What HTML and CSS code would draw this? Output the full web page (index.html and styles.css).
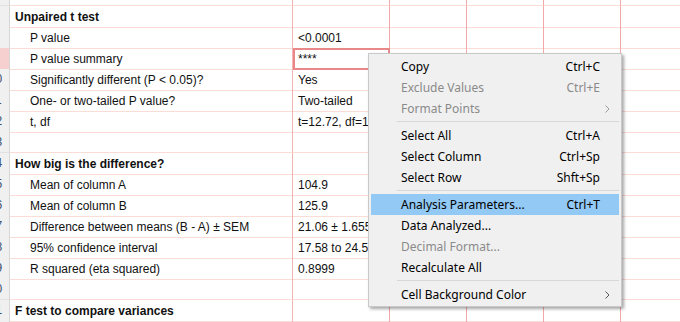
FILE: index.html
```html
<!DOCTYPE html>
<html lang="en">
<head>
    <meta charset="UTF-8">
    <title>Unpaired t test</title>
    <link rel="stylesheet" href="styles.css">
</head>
<body>

<div class="sheet">
    <div class="row top"><div class="hdr"></div><div class="cell a"></div><div class="cell b"></div><div class="cell c"></div><div class="cell c"></div><div class="cell c"></div><div class="cell d"></div></div>

    <div class="row"><div class="hdr"></div><div class="cell a title">Unpaired t test</div><div class="cell b"></div><div class="cell c"></div><div class="cell c"></div><div class="cell c"></div><div class="cell d"></div></div>
    <div class="row"><div class="hdr"></div><div class="cell a sub">P value</div><div class="cell b">&lt;0.0001</div><div class="cell c"></div><div class="cell c"></div><div class="cell c"></div><div class="cell d"></div></div>
    <div class="row"><div class="hdr picked"></div><div class="cell a sub">P value summary</div><div class="cell b selected">****</div><div class="cell c"></div><div class="cell c"></div><div class="cell c"></div><div class="cell d"></div></div>
    <div class="row"><div class="hdr"><span>10</span></div><div class="cell a sub">Significantly different (P &lt; 0.05)?</div><div class="cell b">Yes</div><div class="cell c"></div><div class="cell c"></div><div class="cell c"></div><div class="cell d"></div></div>
    <div class="row"><div class="hdr"><span>11</span></div><div class="cell a sub">One- or two-tailed P value?</div><div class="cell b">Two-tailed</div><div class="cell c"></div><div class="cell c"></div><div class="cell c"></div><div class="cell d"></div></div>
    <div class="row"><div class="hdr"><span>12</span></div><div class="cell a sub">t, df</div><div class="cell b">t=12.72, df=18</div><div class="cell c"></div><div class="cell c"></div><div class="cell c"></div><div class="cell d"></div></div>
    <div class="row"><div class="hdr"><span>13</span></div><div class="cell a"></div><div class="cell b"></div><div class="cell c"></div><div class="cell c"></div><div class="cell c"></div><div class="cell d"></div></div>
    <div class="row"><div class="hdr"><span>14</span></div><div class="cell a title">How big is the difference?</div><div class="cell b"></div><div class="cell c"></div><div class="cell c"></div><div class="cell c"></div><div class="cell d"></div></div>
    <div class="row"><div class="hdr"><span>15</span></div><div class="cell a sub">Mean of column A</div><div class="cell b">104.9</div><div class="cell c"></div><div class="cell c"></div><div class="cell c"></div><div class="cell d"></div></div>
    <div class="row"><div class="hdr"><span>16</span></div><div class="cell a sub">Mean of column B</div><div class="cell b">125.9</div><div class="cell c"></div><div class="cell c"></div><div class="cell c"></div><div class="cell d"></div></div>
    <div class="row"><div class="hdr"><span>17</span></div><div class="cell a sub">Difference between means (B - A) ± SEM</div><div class="cell b">21.06 ± 1.655</div><div class="cell c"></div><div class="cell c"></div><div class="cell c"></div><div class="cell d"></div></div>
    <div class="row"><div class="hdr"><span>18</span></div><div class="cell a sub">95% confidence interval</div><div class="cell b">17.58 to 24.53</div><div class="cell c"></div><div class="cell c"></div><div class="cell c"></div><div class="cell d"></div></div>
    <div class="row"><div class="hdr"><span>19</span></div><div class="cell a sub">R squared (eta squared)</div><div class="cell b">0.8999</div><div class="cell c"></div><div class="cell c"></div><div class="cell c"></div><div class="cell d"></div></div>
    <div class="row"><div class="hdr"><span>20</span></div><div class="cell a"></div><div class="cell b"></div><div class="cell c"></div><div class="cell c"></div><div class="cell c"></div><div class="cell d"></div></div>
    <div class="row"><div class="hdr"><span>21</span></div><div class="cell a title">F test to compare variances</div><div class="cell b"></div><div class="cell c"></div><div class="cell c"></div><div class="cell c"></div><div class="cell d"></div></div>
    <div class="row end"><div class="hdr"></div><div class="cell a"></div><div class="cell b"></div><div class="cell c"></div><div class="cell c"></div><div class="cell c"></div><div class="cell d"></div></div>
</div>

<ul class="menu">
    <li class="item"><span>Copy</span><span class="key">Ctrl+C</span></li>
    <li class="item off"><span>Exclude Values</span><span class="key">Ctrl+E</span></li>
    <li class="item off"><span>Format Points</span><svg class="arrow" width="5" height="8" viewBox="0 0 5 8"><path d="M0.5 0.5 L4 4 L0.5 7.5" fill="none" stroke="#9a9a9a" stroke-width="1"/></svg></li>
    <li class="sep"></li>
    <li class="item"><span>Select All</span><span class="key">Ctrl+A</span></li>
    <li class="item"><span>Select Column</span><span class="key">Ctrl+Sp</span></li>
    <li class="item"><span>Select Row</span><span class="key">Shft+Sp</span></li>
    <li class="sep"></li>
    <li class="item hover"><span>Analysis Parameters...</span><span class="key">Ctrl+T</span></li>
    <li class="item"><span>Data Analyzed...</span></li>
    <li class="item off"><span>Decimal Format...</span></li>
    <li class="item"><span>Recalculate All</span></li>
    <li class="sep"></li>
    <li class="item"><span>Cell Background Color</span><svg class="arrow" width="5" height="8" viewBox="0 0 5 8"><path d="M0.5 0.5 L4 4 L0.5 7.5" fill="none" stroke="#555" stroke-width="1"/></svg></li>
</ul>

</body>
</html>
```

FILE: styles.css
```css
* {
    box-sizing: border-box;
}
html, body {
    margin: 0;
    padding: 0;
    background: white;
    overflow: hidden;
}
body {
    font-family: "Liberation Sans", Arial, sans-serif;
    font-size: 12px;
    color: #111;
}
.sheet {
    margin-left: -18px;
}
.row {
    display: grid;
    grid-template-columns: 28px 283px 97px 77px 77px 77px 77px;
    height: 21px;
}
.row.top {
    height: 6px;
}
.row.end {
    height: 1px;
}
.row.end .cell, .row.end .hdr {
    border-bottom: none;
}
.hdr {
    background: #f0f0f0;
    border-right: 1px solid #d6d6d6;
    border-bottom: 1px solid #e2e2e2;
    text-align: center;
    line-height: 20px;
    color: #3c4f6e;
    overflow: hidden;
}
.hdr.picked {
    background: #f6cfcf;
}
.cell {
    border-bottom: 1px solid #fbdcd6;
    line-height: 20px;
    padding-top: 1px;
    white-space: nowrap;
    padding-left: 5px;
}
.cell.a {
    border-right: 1px solid #f4b4b4;
}
.cell.b, .cell.c {
    border-right: 1px solid #f2a8a8;
}
.title {
    font-weight: bold;
}
.cell.sub {
    padding-left: 20px;
}
.selected {
    outline: 2px solid #e98888;
    outline-offset: -2px;
}
.menu {
    position: absolute;
    left: 368px;
    top: 53px;
    width: 254px;
    margin: 0;
    padding: 2px 0 1px;
    list-style: none;
    background: #f0f0f0;
    border: 1px solid #c9c9c9;
    box-shadow: 2px 2px 3px rgba(0, 0, 0, 0.35);
    font-family: "Noto Sans", "Open Sans", sans-serif;
    font-size: 12px;
    color: #000;
}
.item {
    display: flex;
    align-items: center;
    justify-content: space-between;
    height: 21px;
    margin: 0 2px;
    padding: 0 19px 0 30px;
    position: relative;
}
.item.off {
    color: #8a8a8a;
}
.item.hover {
    background: #93c9f5;
}
.arrow {
    position: absolute;
    right: 9px;
    top: 7px;
}
.sep {
    height: 6px;
    margin: 0 2px 0 28px;
    border-top: 2px solid transparent;
    border-bottom: 3px solid transparent;
    background: #d7d7d7;
    background-clip: content-box;
}
```
